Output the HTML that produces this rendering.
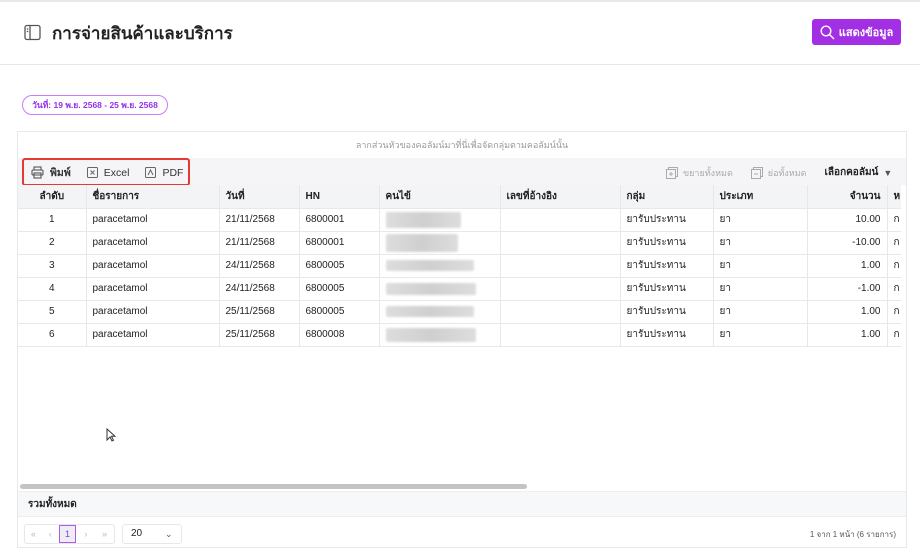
<!DOCTYPE html>
<html><head><meta charset="utf-8"><style>
*{box-sizing:border-box;margin:0;padding:0}
body{width:920px;height:559px;background:#fff;font-family:"Liberation Sans","Noto Sans CJK SC",sans-serif;position:relative;overflow:hidden;color:#222}
.abs{position:absolute}
table{border-collapse:collapse;table-layout:fixed}
td,th{height:23px;font-size:10px;padding:0 6px;border-right:1px solid #e5e7eb;border-bottom:1px solid #e8e8ea;white-space:nowrap;overflow:hidden;text-align:left}
th{background:#f3f4f6;font-weight:bold;color:#222}
.c{text-align:center}.r{text-align:right}
.blur{display:inline-block;height:16px;background:linear-gradient(90deg,#ddd,#cfcfcf,#ddd);border-radius:2px;filter:blur(1px);vertical-align:middle}
</style></head><body>
<div class="abs" style="left:0;top:0;width:920px;height:2px;background:#e8e8ea"></div>
<svg class="abs" style="left:24px;top:24px" width="17" height="17" viewBox="0 0 17 17" fill="none" stroke="#555" stroke-width="1.3"><rect x="1" y="1.5" width="15" height="14" rx="2"/><line x1="6" y1="1.5" x2="6" y2="15.5"/><line x1="2.8" y1="5" x2="4.3" y2="5"/><line x1="2.8" y1="7.5" x2="4.3" y2="7.5"/></svg>
<div class="abs" style="left:52px;top:20px;font-size:17px;font-weight:bold;color:#222">การจ่ายสินค้าและบริการ</div>
<div class="abs" style="left:812px;top:19px;width:89px;height:26px;background:#a22fe3;border-radius:3px;color:#fff;font-size:11px;font-weight:bold;display:flex;align-items:center;justify-content:center;gap:4px"><svg width="15" height="15" viewBox="0 0 15 15" fill="none" stroke="#fff" stroke-width="1.4"><circle cx="6" cy="6" r="4.8"/><line x1="9.5" y1="9.5" x2="14" y2="14"/></svg>แสดงข้อมูล</div>
<div class="abs" style="left:0;top:64px;width:920px;height:1px;background:#e5e7eb"></div>
<div class="abs" style="left:22px;top:95px;width:146px;height:20px;border:1px solid #c77dff;border-radius:10px;color:#9333ea;font-size:8.5px;font-weight:bold;display:flex;align-items:center;justify-content:center">วันที่: 19 พ.ย. 2568 - 25 พ.ย. 2568</div>
<div class="abs" style="left:17px;top:131px;width:890px;height:417px;border:1px solid #e8e8ea;background:#fff"></div>
<div class="abs" style="left:18px;top:132px;width:888px;height:26px;font-size:9px;color:#999;text-align:center;line-height:26px">ลากส่วนหัวของคอลัมน์มาที่นี่เพื่อจัดกลุ่มตามคอลัมน์นั้น</div>
<div class="abs" style="left:18px;top:158px;width:888px;height:27px;background:#f5f5f7"></div>
<div class="abs" style="left:22px;top:158px;width:168px;height:28px;border:2px solid #e53935;border-radius:3px"></div>
<div class="abs" style="left:31px;top:164px;font-size:10.5px;display:flex;align-items:center;color:#333">
<svg width="13" height="13" viewBox="0 0 13 13" fill="none" stroke="#555" stroke-width="1.1"><rect x="3" y="1" width="7" height="3"/><rect x="1" y="4" width="11" height="5" rx="1"/><rect x="3" y="7" width="7" height="5"/></svg><b style="margin-left:6px">พิมพ์</b>
<svg style="margin-left:16px" width="11" height="11" viewBox="0 0 11 11" fill="none" stroke="#666" stroke-width="1"><rect x=".5" y=".5" width="10" height="10" rx="1"/><path d="M3.5 3.5l4 4M7.5 3.5l-4 4"/></svg><span style="margin-left:6px">Excel</span>
<svg style="margin-left:16px" width="11" height="11" viewBox="0 0 11 11" fill="none" stroke="#666" stroke-width="1"><rect x=".5" y=".5" width="10" height="10" rx="1"/><path d="M3 8l2.5-5L8 8"/></svg><span style="margin-left:6px">PDF</span></div>
<div class="abs" style="left:666px;top:165px;font-size:9px;color:#aaa;display:flex;align-items:center;gap:5px">
<svg width="12" height="12" viewBox="0 0 12 12" fill="none" stroke="#aaa"><rect x=".5" y="2.5" width="9" height="9"/><path d="M2.5 2.5V.5h9v9h-2M3 7h4M5 5v4"/></svg>ขยายทั้งหมด<span style="width:8px"></span>
<svg width="12" height="12" viewBox="0 0 12 12" fill="none" stroke="#aaa"><rect x=".5" y="2.5" width="9" height="9"/><path d="M2.5 2.5V.5h9v9h-2M3 7h4"/></svg>ย่อทั้งหมด<span style="width:8px"></span>
<b style="color:#222;font-size:10px">เลือกคอลัมน์</b><span style="color:#555;font-size:9px">▼</span></div>
<div class="abs" style="left:18px;top:185px;width:883px;height:170px;overflow:hidden">
<table style="width:900px">
<colgroup><col style="width:68px"><col style="width:133px"><col style="width:80px"><col style="width:80px"><col style="width:121px"><col style="width:120px"><col style="width:93px"><col style="width:94px"><col style="width:80px"><col style="width:31px"></colgroup>
<tr><th class="c">ลำดับ</th><th>ชื่อรายการ</th><th>วันที่</th><th>HN</th><th>คนไข้</th><th>เลขที่อ้างอิง</th><th>กลุ่ม</th><th>ประเภท</th><th class="r">จำนวน</th><th>ห</th></tr>
<tr><td class="c">1</td><td>paracetamol</td><td>21/11/2568</td><td>6800001</td><td><span class="blur" style="width:75px"></span></td><td></td><td>ยารับประทาน</td><td>ยา</td><td class="r">10.00</td><td>ก</td></tr>
<tr><td class="c">2</td><td>paracetamol</td><td>21/11/2568</td><td>6800001</td><td><span class="blur" style="width:72px;height:18px"></span></td><td></td><td>ยารับประทาน</td><td>ยา</td><td class="r">-10.00</td><td>ก</td></tr>
<tr><td class="c">3</td><td>paracetamol</td><td>24/11/2568</td><td>6800005</td><td><span class="blur" style="width:88px;height:11px"></span></td><td></td><td>ยารับประทาน</td><td>ยา</td><td class="r">1.00</td><td>ก</td></tr>
<tr><td class="c">4</td><td>paracetamol</td><td>24/11/2568</td><td>6800005</td><td><span class="blur" style="width:90px;height:12px"></span></td><td></td><td>ยารับประทาน</td><td>ยา</td><td class="r">-1.00</td><td>ก</td></tr>
<tr><td class="c">5</td><td>paracetamol</td><td>25/11/2568</td><td>6800005</td><td><span class="blur" style="width:88px;height:11px"></span></td><td></td><td>ยารับประทาน</td><td>ยา</td><td class="r">1.00</td><td>ก</td></tr>
<tr><td class="c">6</td><td>paracetamol</td><td>25/11/2568</td><td>6800008</td><td><span class="blur" style="width:90px;height:14px"></span></td><td></td><td>ยารับประทาน</td><td>ยา</td><td class="r">1.00</td><td>ก</td></tr>
</table></div>
<div class="abs" style="left:20px;top:484px;width:507px;height:5px;background:#c4c4c4;border-radius:3px"></div>
<div class="abs" style="left:18px;top:491px;width:888px;height:26px;background:#f7f8fa;border-top:1px solid #eee;border-bottom:1px solid #eee;font-size:10px;font-weight:bold;line-height:26px;padding-left:10px">รวมทั้งหมด</div>
<div class="abs" style="left:24px;top:524px;width:91px;height:20px;border:1px solid #e5e7eb;border-radius:3px;display:flex;font-size:9px;color:#bbb">
<span style="width:17px;text-align:center;line-height:18px">«</span><span style="width:17px;text-align:center;line-height:18px">‹</span><span style="width:18px;text-align:center;line-height:16px;border:1px solid #b05be8;background:#eceef2;color:#9333ea;height:18px">1</span><span style="width:19px;text-align:center;line-height:18px">›</span><span style="width:19px;text-align:center;line-height:18px">»</span></div>
<div class="abs" style="left:122px;top:524px;width:60px;height:20px;border:1px solid #e5e7eb;border-radius:3px;font-size:10px;line-height:18px;padding-left:8px">20<span style="position:absolute;left:42px;font-size:9px;color:#555">⌄</span></div>
<div class="abs" style="left:700px;top:528px;width:196px;text-align:right;font-size:8px;color:#555">1 จาก 1 หน้า (6 รายการ)</div>
<svg class="abs" style="left:106px;top:428px" width="10" height="14" viewBox="0 0 10 14"><path d="M1 1v11l3-3 2 4 1.5-.7-2-4H9z" fill="#fff" stroke="#333" stroke-width="1"/></svg>
</body></html>
